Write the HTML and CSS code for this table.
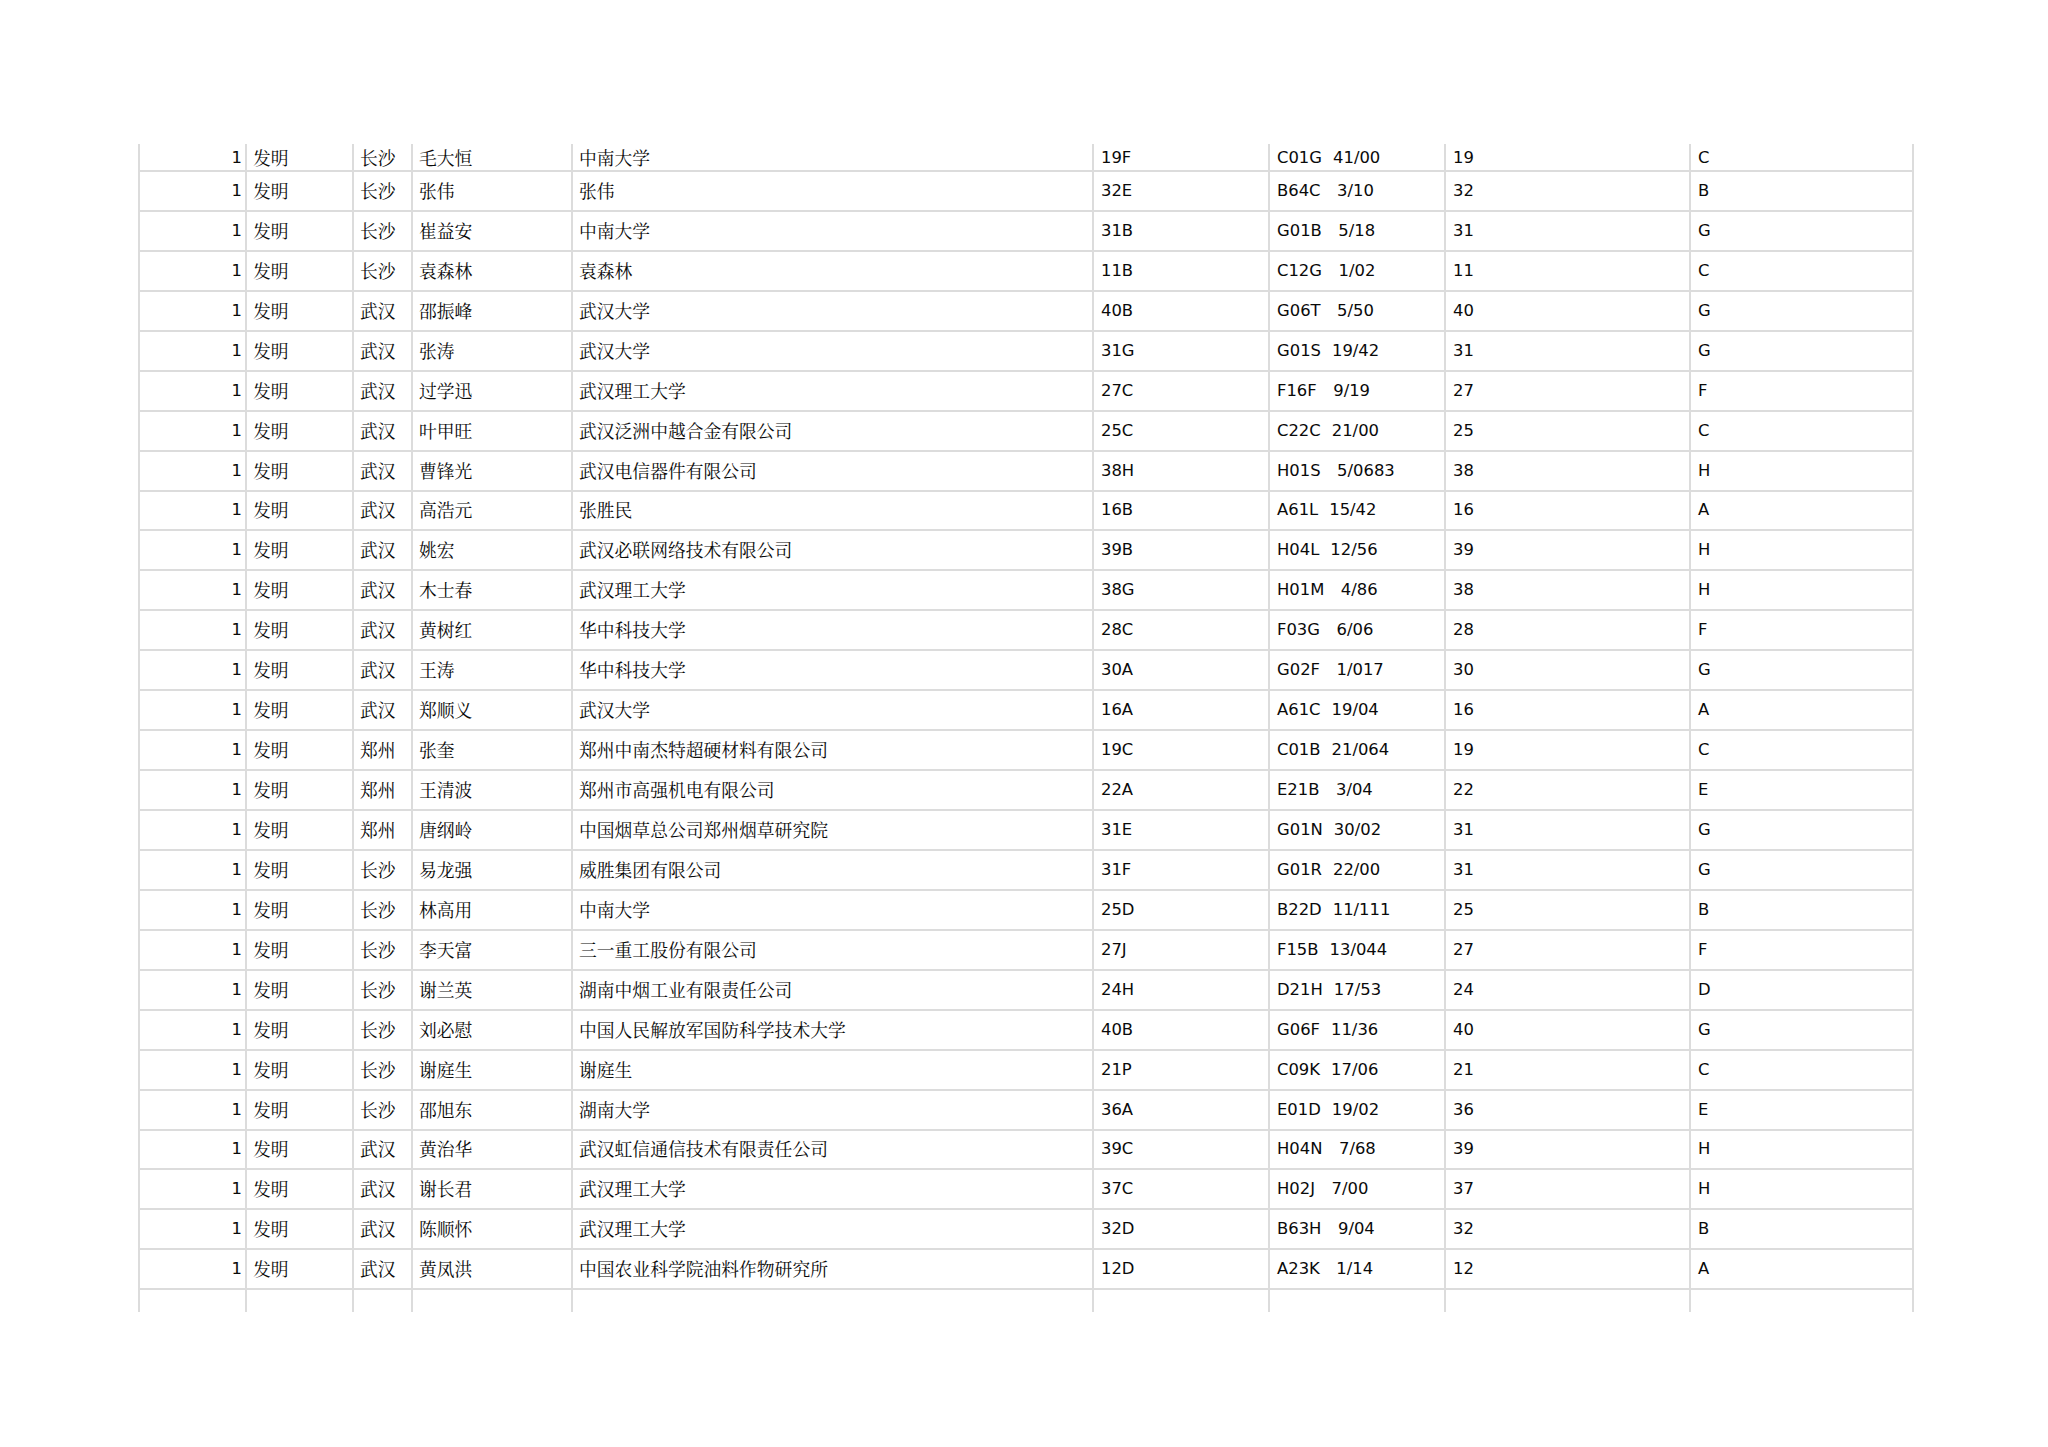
FILE: index.html
```html
<!DOCTYPE html>
<html lang="zh-CN">
<head>
<meta charset="utf-8">
<title>专利列表</title>
<link rel="stylesheet" href="styles.css">
</head>
<body>
<table class="sheet">
  <colgroup>
    <col class="w1"><col class="w2"><col class="w3"><col class="w4"><col class="w5"><col class="w6"><col class="w7"><col class="w8"><col class="w9">
  </colgroup>
  <tbody>
    <tr class="first"><td class="num">1</td><td class="cjk">发明</td><td class="cjk">长沙</td><td class="cjk">毛大恒</td><td class="cjk">中南大学</td><td>19F</td><td class="ipc">C01G  41/00</td><td>19</td><td>C</td></tr>
    <tr><td class="num">1</td><td class="cjk">发明</td><td class="cjk">长沙</td><td class="cjk">张伟</td><td class="cjk">张伟</td><td>32E</td><td class="ipc">B64C   3/10</td><td>32</td><td>B</td></tr>
    <tr><td class="num">1</td><td class="cjk">发明</td><td class="cjk">长沙</td><td class="cjk">崔益安</td><td class="cjk">中南大学</td><td>31B</td><td class="ipc">G01B   5/18</td><td>31</td><td>G</td></tr>
    <tr><td class="num">1</td><td class="cjk">发明</td><td class="cjk">长沙</td><td class="cjk">袁森林</td><td class="cjk">袁森林</td><td>11B</td><td class="ipc">C12G   1/02</td><td>11</td><td>C</td></tr>
    <tr><td class="num">1</td><td class="cjk">发明</td><td class="cjk">武汉</td><td class="cjk">邵振峰</td><td class="cjk">武汉大学</td><td>40B</td><td class="ipc">G06T   5/50</td><td>40</td><td>G</td></tr>
    <tr><td class="num">1</td><td class="cjk">发明</td><td class="cjk">武汉</td><td class="cjk">张涛</td><td class="cjk">武汉大学</td><td>31G</td><td class="ipc">G01S  19/42</td><td>31</td><td>G</td></tr>
    <tr><td class="num">1</td><td class="cjk">发明</td><td class="cjk">武汉</td><td class="cjk">过学迅</td><td class="cjk">武汉理工大学</td><td>27C</td><td class="ipc">F16F   9/19</td><td>27</td><td>F</td></tr>
    <tr><td class="num">1</td><td class="cjk">发明</td><td class="cjk">武汉</td><td class="cjk">叶甲旺</td><td class="cjk">武汉泛洲中越合金有限公司</td><td>25C</td><td class="ipc">C22C  21/00</td><td>25</td><td>C</td></tr>
    <tr><td class="num">1</td><td class="cjk">发明</td><td class="cjk">武汉</td><td class="cjk">曹锋光</td><td class="cjk">武汉电信器件有限公司</td><td>38H</td><td class="ipc">H01S   5/0683</td><td>38</td><td>H</td></tr>
    <tr><td class="num">1</td><td class="cjk">发明</td><td class="cjk">武汉</td><td class="cjk">高浩元</td><td class="cjk">张胜民</td><td>16B</td><td class="ipc">A61L  15/42</td><td>16</td><td>A</td></tr>
    <tr><td class="num">1</td><td class="cjk">发明</td><td class="cjk">武汉</td><td class="cjk">姚宏</td><td class="cjk">武汉必联网络技术有限公司</td><td>39B</td><td class="ipc">H04L  12/56</td><td>39</td><td>H</td></tr>
    <tr><td class="num">1</td><td class="cjk">发明</td><td class="cjk">武汉</td><td class="cjk">木士春</td><td class="cjk">武汉理工大学</td><td>38G</td><td class="ipc">H01M   4/86</td><td>38</td><td>H</td></tr>
    <tr><td class="num">1</td><td class="cjk">发明</td><td class="cjk">武汉</td><td class="cjk">黄树红</td><td class="cjk">华中科技大学</td><td>28C</td><td class="ipc">F03G   6/06</td><td>28</td><td>F</td></tr>
    <tr><td class="num">1</td><td class="cjk">发明</td><td class="cjk">武汉</td><td class="cjk">王涛</td><td class="cjk">华中科技大学</td><td>30A</td><td class="ipc">G02F   1/017</td><td>30</td><td>G</td></tr>
    <tr><td class="num">1</td><td class="cjk">发明</td><td class="cjk">武汉</td><td class="cjk">郑顺义</td><td class="cjk">武汉大学</td><td>16A</td><td class="ipc">A61C  19/04</td><td>16</td><td>A</td></tr>
    <tr><td class="num">1</td><td class="cjk">发明</td><td class="cjk">郑州</td><td class="cjk">张奎</td><td class="cjk">郑州中南杰特超硬材料有限公司</td><td>19C</td><td class="ipc">C01B  21/064</td><td>19</td><td>C</td></tr>
    <tr><td class="num">1</td><td class="cjk">发明</td><td class="cjk">郑州</td><td class="cjk">王清波</td><td class="cjk">郑州市高强机电有限公司</td><td>22A</td><td class="ipc">E21B   3/04</td><td>22</td><td>E</td></tr>
    <tr><td class="num">1</td><td class="cjk">发明</td><td class="cjk">郑州</td><td class="cjk">唐纲岭</td><td class="cjk">中国烟草总公司郑州烟草研究院</td><td>31E</td><td class="ipc">G01N  30/02</td><td>31</td><td>G</td></tr>
    <tr><td class="num">1</td><td class="cjk">发明</td><td class="cjk">长沙</td><td class="cjk">易龙强</td><td class="cjk">威胜集团有限公司</td><td>31F</td><td class="ipc">G01R  22/00</td><td>31</td><td>G</td></tr>
    <tr><td class="num">1</td><td class="cjk">发明</td><td class="cjk">长沙</td><td class="cjk">林高用</td><td class="cjk">中南大学</td><td>25D</td><td class="ipc">B22D  11/111</td><td>25</td><td>B</td></tr>
    <tr><td class="num">1</td><td class="cjk">发明</td><td class="cjk">长沙</td><td class="cjk">李天富</td><td class="cjk">三一重工股份有限公司</td><td>27J</td><td class="ipc">F15B  13/044</td><td>27</td><td>F</td></tr>
    <tr><td class="num">1</td><td class="cjk">发明</td><td class="cjk">长沙</td><td class="cjk">谢兰英</td><td class="cjk">湖南中烟工业有限责任公司</td><td>24H</td><td class="ipc">D21H  17/53</td><td>24</td><td>D</td></tr>
    <tr><td class="num">1</td><td class="cjk">发明</td><td class="cjk">长沙</td><td class="cjk">刘必慰</td><td class="cjk">中国人民解放军国防科学技术大学</td><td>40B</td><td class="ipc">G06F  11/36</td><td>40</td><td>G</td></tr>
    <tr><td class="num">1</td><td class="cjk">发明</td><td class="cjk">长沙</td><td class="cjk">谢庭生</td><td class="cjk">谢庭生</td><td>21P</td><td class="ipc">C09K  17/06</td><td>21</td><td>C</td></tr>
    <tr><td class="num">1</td><td class="cjk">发明</td><td class="cjk">长沙</td><td class="cjk">邵旭东</td><td class="cjk">湖南大学</td><td>36A</td><td class="ipc">E01D  19/02</td><td>36</td><td>E</td></tr>
    <tr><td class="num">1</td><td class="cjk">发明</td><td class="cjk">武汉</td><td class="cjk">黄治华</td><td class="cjk">武汉虹信通信技术有限责任公司</td><td>39C</td><td class="ipc">H04N   7/68</td><td>39</td><td>H</td></tr>
    <tr><td class="num">1</td><td class="cjk">发明</td><td class="cjk">武汉</td><td class="cjk">谢长君</td><td class="cjk">武汉理工大学</td><td>37C</td><td class="ipc">H02J   7/00</td><td>37</td><td>H</td></tr>
    <tr><td class="num">1</td><td class="cjk">发明</td><td class="cjk">武汉</td><td class="cjk">陈顺怀</td><td class="cjk">武汉理工大学</td><td>32D</td><td class="ipc">B63H   9/04</td><td>32</td><td>B</td></tr>
    <tr><td class="num">1</td><td class="cjk">发明</td><td class="cjk">武汉</td><td class="cjk">黄凤洪</td><td class="cjk">中国农业科学院油料作物研究所</td><td>12D</td><td class="ipc">A23K   1/14</td><td>12</td><td>A</td></tr>
    <tr class="last"><td></td><td></td><td></td><td></td><td></td><td></td><td></td><td></td><td></td></tr>
  </tbody>
</table>
</body>
</html>
```

FILE: styles.css
```css
html, body {
  margin: 0;
  padding: 0;
  background: #ffffff;
}

body {
  padding: 144px 0 0 138px;
  color: #0a0a0a;
  font-family: "DejaVu Sans", "Noto Sans CJK SC", sans-serif;
  font-size: 16.4px;
}

.sheet {
  border-collapse: collapse;
  table-layout: fixed;
  width: 1774px;
}

.w1 { width: 107px; }
.w2 { width: 107px; }
.w3 { width: 59px; }
.w4 { width: 160px; }
.w5 { width: 521px; }
.w6 { width: 176px; }
.w7 { width: 176px; }
.w8 { width: 245px; }
.w9 { width: 223px; }

.sheet td {
  border: 2px solid #dcdcdc;
  height: 37.94px;
  padding: 0 6px 0 7px;
  vertical-align: middle;
  white-space: nowrap;
  overflow: hidden;
  line-height: 20px;
}

.sheet tr.first td {
  border-top: none;
  height: 25px;
  padding-top: 1px;
}

.sheet tr.last td {
  border-bottom: none;
  height: 22px;
}

.sheet td.num {
  text-align: right;
  padding-right: 3px;
}

.sheet td.cjk {
  font-family: "Noto Serif CJK SC", "Noto Sans CJK SC", serif;
  font-size: 17.8px;
  padding-left: 6px;
}

.sheet td.ipc {
  white-space: pre;
  word-spacing: 0.3px;
}
```
